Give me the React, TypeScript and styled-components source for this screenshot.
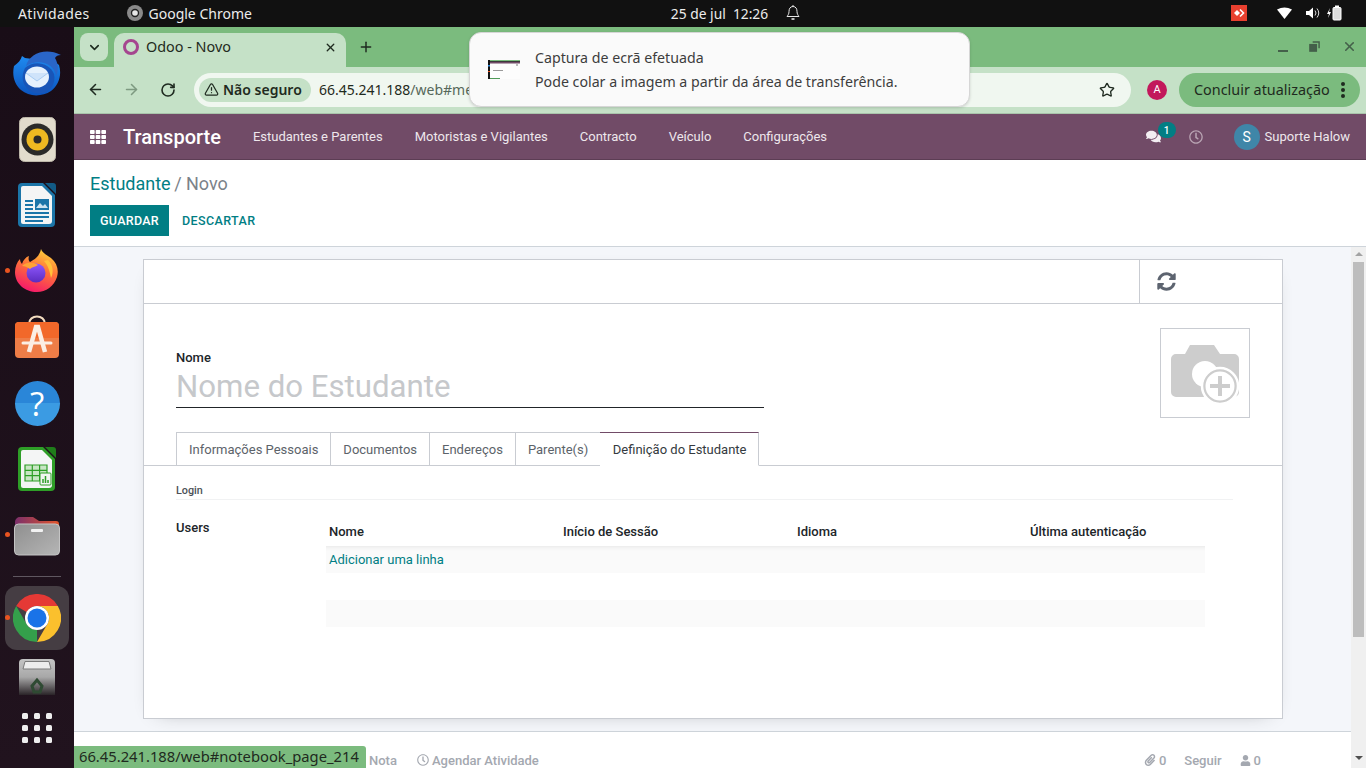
import styled, { createGlobalStyle } from "styled-components";
import {
  ArrowLeft,
  ArrowRight,
  ChevronDown,
  Plus,
  RotateCw,
  Star,
  TriangleAlert,
  X,
} from "lucide-react";
import {
  FaComments,
  FaPaperclip,
  FaRegClock,
  FaSyncAlt,
  FaTh,
  FaUser,
} from "react-icons/fa";

const GlobalStyle = createGlobalStyle`
  html, body {
    margin: 0;
    padding: 0;
    overflow: hidden;
    background: #111;
  }
  * {
    box-sizing: border-box;
  }
`;

const systemFont = `"Noto Sans", "Open Sans", sans-serif`;
const odooFont = `Roboto, "Liberation Sans", sans-serif`;

const Desktop = styled.div`
  width: 1366px;
  height: 768px;
  display: flex;
  flex-direction: column;
  overflow: hidden;
`;

const TopBar = styled.header`
  height: 27px;
  flex: none;
  background: #111111;
  color: #ececec;
  font-family: ${systemFont};
  font-size: 14px;
  display: grid;
  grid-template-columns: 1fr auto 1fr;
  align-items: center;
  padding: 0 0 1px 18px;
`;

const TopLeft = styled.div`
  display: flex;
  align-items: center;
  gap: 37px;
`;

const TopActivities = styled.span`
  letter-spacing: 0.35px;
`;

const ChromeApp = styled.div`
  display: flex;
  align-items: center;
  gap: 6px;
`;

const TopCenter = styled.div`
  display: flex;
  align-items: center;
  gap: 17px;
  font-size: 13.8px;
  margin-left: 88px;
`;

const TopRight = styled.div`
  display: flex;
  align-items: center;
  justify-content: flex-end;
  padding-right: 17px;
`;

const Body = styled.div`
  flex: 1;
  display: flex;
  min-height: 0;
`;

const Dock = styled.nav`
  width: 74px;
  flex: none;
  background: linear-gradient(180deg, #190d17, #21131e);
  display: flex;
  flex-direction: column;
  align-items: center;
  padding-top: 13px;
`;

const DockItem = styled.div<{ $active?: boolean; $running?: boolean }>`
  position: relative;
  width: 64px;
  height: ${(p) => (p.$active ? "64px" : "66px")};
  margin: ${(p) => (p.$active ? "1px 0" : "0")};
  flex: none;
  display: flex;
  align-items: center;
  justify-content: center;
  border-radius: 12px;
  background: ${(p) => (p.$active ? "#453d43" : "transparent")};
  &::before {
    content: "";
    display: ${(p) => (p.$running ? "block" : "none")};
    position: absolute;
    left: 0;
    top: ${(p) => (p.$active ? "29px" : "30px")};
    width: 5px;
    height: 5px;
    border-radius: 50%;
    background: #e95420;
  }
`;

const TrashItem = styled.div`
  width: 64px;
  height: 44px;
  flex: none;
  display: flex;
  align-items: flex-end;
  justify-content: center;
`;

const DockSeparator = styled.div`
  width: 48px;
  height: 1px;
  background: #5f5760;
  flex: none;
  margin: 8px 0;
`;

const Window = styled.main`
  flex: 1;
  min-width: 0;
  position: relative;
  display: flex;
  flex-direction: column;
  font-family: ${odooFont};
`;

const TabStrip = styled.div`
  height: 40px;
  flex: none;
  background: #7bbb7e;
  display: flex;
  align-items: flex-end;
  padding-left: 6px;
`;

const TabSearch = styled.div`
  width: 28px;
  height: 28px;
  background: #c5e1c7;
  border-radius: 8px;
  margin-bottom: 6px;
  display: flex;
  align-items: center;
  justify-content: center;
  color: #1c2a1e;
`;

const Tab = styled.div`
  width: 232px;
  height: 34px;
  margin-left: 6px;
  background: #c5e1c7;
  border-radius: 10px 10px 0 0;
  display: flex;
  align-items: center;
  padding: 0 9px 6px 9px;
  color: #1f2a20;
`;

const Favicon = styled.span`
  width: 16px;
  height: 16px;
  border: 3px solid #a5468f;
  border-radius: 50%;
  flex: none;
  margin-right: 7px;
`;

const TabTitle = styled.span`
  flex: 1;
  font-family: ${systemFont};
  font-size: 14.4px;
  line-height: 18px;
  margin-top: -1px;
`;

const NewTab = styled.div`
  margin: 0 0 12px 12px;
  display: flex;
  color: #1f2a20;
`;

const WindowControls = styled.div`
  margin: 0 9px 13px auto;
  display: flex;
  align-items: center;
  gap: 22px;
  color: #44604a;
`;

const MinimizeMark = styled.span`
  display: block;
  width: 10px;
  height: 6px;
  border-bottom: 2px solid #44604a;
  transform: translate(1px, 2px);
`;

const Toolbar = styled.div`
  height: 47px;
  flex: none;
  background: #c5e1c7;
  border-bottom: 1px solid #a9c4ab;
  display: flex;
  align-items: center;
  padding: 0 6px 1px 13px;
  color: #1f2a20;
`;

const NavButton = styled.span<{ $dim?: boolean }>`
  width: 36px;
  display: flex;
  color: ${(p) => (p.$dim ? "#7e9a81" : "#1f2a20")};
`;

const ReloadButton = styled(NavButton)`
  padding-left: 1px;
`;

const Omnibox = styled.div`
  width: 937px;
  height: 34px;
  margin-left: -1px;
  background: #f0f7f0;
  border-radius: 17px;
  display: flex;
  align-items: center;
  padding: 0 16px 0 5px;
  font-family: ${systemFont};
  font-size: 14px;
`;

const SecurityChip = styled.div`
  width: 112px;
  height: 24px;
  border-radius: 12px;
  background: #c5e1c7;
  display: flex;
  align-items: center;
  gap: 4px;
  padding-left: 5px;
  font-weight: 600;
  font-size: 14px;
  white-space: nowrap;
  margin-right: 8px;
`;

const UrlHost = styled.span`
  color: #1f2a20;
`;

const UrlPath = styled.span`
  color: #56685a;
  flex: 1;
`;

const ProfileBadge = styled.span`
  width: 20px;
  height: 20px;
  border-radius: 50%;
  background: #c2185b;
  color: #fff;
  font-family: ${odooFont};
  font-size: 11px;
  display: flex;
  align-items: center;
  justify-content: center;
  margin: 0 12px 0 16px;
`;

const UpdatePill = styled.div`
  width: 181px;
  height: 34px;
  border-radius: 17px;
  background: #7bbb7e;
  display: flex;
  align-items: center;
  justify-content: space-between;
  padding: 0 15px 0 15px;
  font-family: ${systemFont};
  font-size: 14.4px;
  color: #1f2a20;
  white-space: nowrap;
`;

const Kebab = styled.span`
  width: 4px;
  height: 4px;
  flex: none;
  border-radius: 50%;
  background: #1f2a20;
  box-shadow: 0 -6px 0 #1f2a20, 0 6px 0 #1f2a20;
`;

const OdooNav = styled.div`
  height: 46px;
  flex: none;
  background: #714b67;
  border-bottom: 1px solid #5c3d54;
  color: #fff;
  display: flex;
  align-items: center;
  padding-left: 16px;
`;

const BrandName = styled.span`
  font-size: 20px;
  font-weight: 500;
  margin-left: 17px;
  margin-right: 16px;
`;

const NavLink = styled.a`
  font-size: 13px;
  color: #eee7ec;
  padding: 0 16px;
`;

const NavRight = styled.div`
  margin-left: auto;
  display: flex;
  align-items: center;
  padding-right: 16px;
`;

const ChatIcon = styled.span`
  position: relative;
  display: flex;
  color: #f3eef2;
  margin-right: 28px;
`;

const CountBadge = styled.span`
  position: absolute;
  left: 12px;
  top: -7px;
  width: 18px;
  height: 16px;
  border-radius: 8px;
  background: #017e84;
  color: #fff;
  font-size: 10px;
  font-weight: 500;
  display: flex;
  align-items: center;
  justify-content: center;
`;

const ClockIcon = styled.span`
  display: flex;
  color: #b9a4b3;
  margin-right: 31px;
`;

const UserAvatar = styled.span`
  width: 26px;
  height: 26px;
  border-radius: 50%;
  background: #3f86a8;
  font-size: 14px;
  display: flex;
  align-items: center;
  justify-content: center;
  margin-right: 5px;
`;

const UserName = styled.span`
  font-size: 13px;
  color: #eee7ec;
`;

const ControlPanel = styled.section`
  height: 87px;
  flex: none;
  background: #fff;
  border-bottom: 1px solid #ced4da;
  padding: 13px 16px 0;
`;

const Breadcrumb = styled.div`
  font-size: 18px;
  line-height: 21px;
  color: #017e84;
`;

const BreadcrumbCurrent = styled.span`
  color: #7b8289;
  margin-left: -1px;
`;

const PanelButtons = styled.div`
  display: flex;
  align-items: center;
  margin-top: 11px;
  gap: 13px;
`;

const SaveButton = styled.button`
  width: 79px;
  height: 31px;
  border: 0;
  background: #017e84;
  color: #fff;
  font: 500 12.5px ${odooFont};
  letter-spacing: 0.3px;
  padding: 0;
`;

const DiscardButton = styled.button`
  border: 0;
  background: none;
  color: #017e84;
  font: 500 12.5px ${odooFont};
  letter-spacing: 0.4px;
  padding: 0;
`;

const ViewRow = styled.div`
  flex: 1;
  min-height: 0;
  display: flex;
`;

const ViewColumn = styled.div`
  flex: 1;
  min-width: 0;
  display: flex;
  flex-direction: column;
`;

const SheetBackground = styled.div`
  flex: 1;
  min-height: 0;
  background: #f4f6fa;
  padding: 12px 68px 12px 69px;
  border-bottom: 1px solid #ced4da;
`;

const Sheet = styled.article`
  height: 460px;
  background: #fff;
  border: 1px solid #c9ccd2;
  box-shadow: 0 5px 20px -15px rgba(0, 0, 0, 0.45);
  display: flex;
  flex-direction: column;
`;

const StatusRow = styled.div`
  height: 44px;
  flex: none;
  border-bottom: 1px solid #c9ccd2;
  display: flex;
  justify-content: flex-end;
`;

const StatusButton = styled.div`
  width: 143px;
  border-left: 1px solid #c9ccd2;
  display: flex;
  align-items: center;
  padding-left: 17px;
  color: #5d6470;
`;

const TitleRow = styled.div`
  height: 128px;
  flex: none;
  display: flex;
  justify-content: space-between;
  padding: 24px 32px 0;
`;

const TitleBlock = styled.div`
  width: 588px;
  padding-top: 22px;
`;

const FieldLabel = styled.label`
  display: block;
  font-size: 13px;
  line-height: 15px;
  font-weight: 500;
  color: #212529;
`;

const NameInput = styled.div`
  height: 41px;
  margin-top: 2px;
  padding-top: 2px;
  font-size: 31.2px;
  line-height: 36px;
  color: #c6c8cb;
  border-bottom: 1px solid #212529;
  white-space: nowrap;
`;

const ImagePicker = styled.div`
  width: 90px;
  height: 90px;
  padding-top: 4px;
  border: 1px solid #c9ccd2;
  display: flex;
  align-items: center;
  justify-content: center;
`;

const TabBar = styled.div`
  height: 34px;
  flex: none;
  border-bottom: 1px solid #c9ccd2;
  display: flex;
  padding-left: 32px;
`;

const FormTab = styled.div<{ $active?: boolean }>`
  height: 34px;
  padding: ${(p) => (p.$active ? "0 11.5px 0 12.5px" : "0 12px")};
  display: flex;
  align-items: center;
  font-size: 13px;
  color: ${(p) => (p.$active ? "#343a40" : "#5c636a")};
  background: #fff;
  border: 1px solid #c9ccd2;
  border-left-width: ${(p) => (p.$active ? "0" : "1px")};
  border-right-width: ${(p) => (p.$active ? "1px" : "0")};
  border-top-color: ${(p) => (p.$active ? "#714b67" : "#c9ccd2")};
  border-bottom-color: ${(p) => (p.$active ? "#fff" : "#c9ccd2")};
`;

const TabPane = styled.div`
  flex: 1;
  padding: 18px 49px 0 32px;
`;

const GroupTitle = styled.div`
  height: 16px;
  font-size: 10.8px;
  line-height: 14px;
  font-weight: 500;
  color: #4c5157;
  border-bottom: 1px solid #f1f2f3;
`;

const UsersRow = styled.div`
  display: flex;
  margin-top: 20px;
`;

const UsersLabel = styled.div`
  width: 150px;
  flex: none;
  font-size: 13px;
  line-height: 15px;
  font-weight: 500;
  color: #212529;
`;

const LinesTable = styled.div`
  width: 879px;
  padding-top: 4px;
`;

const LinesHeader = styled.div`
  display: grid;
  grid-template-columns: 234px 234px 233px 1fr;
  height: 22px;
  padding-left: 3px;
  font-size: 13px;
  line-height: 15px;
  font-weight: 500;
  color: #212529;
`;

const LineRow = styled.div<{ $striped?: boolean }>`
  height: 27px;
  padding-left: 3px;
  display: flex;
  align-items: center;
  font-size: 13px;
  background: ${(p) => (p.$striped ? "#fafafa" : "#fff")};
`;

const FirstLineRow = styled(LineRow)`
  box-shadow: inset 0 5px 4px -4px #e6e6e6;
`;

const AddLine = styled.a`
  color: #017e84;
`;

const Chatter = styled.footer`
  height: 36px;
  flex: none;
  background: #fff;
  display: flex;
  align-items: flex-end;
  padding: 0 90px 0 295px;
  font-size: 13px;
  font-weight: 500;
  color: #a4a8b0;
`;

const ChatterText = styled.span`
  display: flex;
  align-items: center;
  gap: 3px;
  line-height: 15px;
  height: 16px;
  white-space: nowrap;
`;

const ChatterLeft = styled(ChatterText)`
  margin-right: 20px;
`;

const ChatterSpacer = styled.span`
  margin-left: auto;
`;

const ChatterRight = styled(ChatterText)`
  margin-left: 18px;
`;

const Scrollbar = styled.div`
  width: 15px;
  flex: none;
  background: #f0f0f0;
  display: flex;
  flex-direction: column;
  align-items: center;
  padding: 5px 2px 0 2px;
`;

const ScrollArrow = styled.span<{ $down?: boolean }>`
  width: 0;
  height: 0;
  border-left: 4px solid transparent;
  border-right: 4px solid transparent;
  border-bottom: ${(p) => (p.$down ? "0" : "4px solid #a3a3a3")};
  border-top: ${(p) => (p.$down ? "4px solid #505050" : "0")};
  margin-top: ${(p) => (p.$down ? "119px" : "0")};
`;

const ScrollThumb = styled.div`
  width: 11px;
  height: 375px;
  background: #bdbdbd;
  margin-top: 6px;
  align-self: flex-start;
`;

const Notification = styled.aside`
  position: absolute;
  left: 395px;
  top: 5px;
  width: 501px;
  height: 75px;
  background: #fafafa;
  border: 1px solid #d6d6d6;
  border-radius: 12px;
  box-shadow: 0 1px 3px rgba(0, 0, 0, 0.15);
  display: flex;
  align-items: center;
  padding: 0 0 0 18px;
  font-family: ${systemFont};
  color: #3d3d3d;
  font-size: 14.2px;
  line-height: 24px;
`;

const ThumbSlot = styled.span`
  display: flex;
  flex: none;
  margin-right: 15px;
`;

const StatusBubble = styled.div`
  position: absolute;
  left: 0;
  bottom: 0;
  width: 292px;
  height: 22px;
  background: #7bbb7e;
  border-radius: 0 3px 0 0;
  font-family: ${systemFont};
  font-size: 14.75px;
  line-height: 21px;
  color: #1f2a20;
  padding-left: 5px;
  white-space: nowrap;
`;

function ScreenshotThumb() {
  return (
    <svg width="32" height="19" viewBox="0 0 32 19">
      <rect width="32" height="19" fill="#fdfdfd" />
      <rect width="32" height="1" fill="#7bbb7e" />
      <rect y="1" width="32" height="1" fill="#3a3a3a" />
      <rect y="2" width="32" height="1.500" fill="#714b67" />
      <rect width="2" height="19" fill="#111" />
      <rect x="0" y="5" width="2" height="1.500" fill="#2a86d8" />
      <rect x="0" y="11" width="2" height="1" fill="#e95420" />
      <rect x="2" y="18" width="10" height="1" fill="#4f9a57" />
      <rect x="5" y="10" width="10" height="1" fill="#9a9a9a" />
      <rect x="28" y="4" width="2" height="2" fill="#bbb" />
    </svg>
  );
}

function ChromeGlyph() {
  return (
    <svg width="16" height="16" viewBox="0 0 16 16">
      <circle cx="8" cy="8" r="8" fill="#8a8a8a" />
      <circle cx="8" cy="8" r="4.2" fill="#222" />
      <circle cx="8" cy="8" r="2.8" fill="#e6e6e6" />
    </svg>
  );
}

function TrayIcons() {
  return (
    <svg width="118" height="18" viewBox="0 0 118 18">
      <rect x="0" y="1" width="16" height="16" fill="#e8402f" />
      <path d="M3 9l3-3 3 3-3 3z" fill="#fff" />
      <path d="M9 5.5l3.5 3.500-3.500 3.500" fill="none" stroke="#fff" strokeWidth="1.6" />
      <path d="M46 5.5q7.5-4.2 15 0l-7.5 9.5z" fill="#fff" />
      <path d="M75 7h3l4-3.5v11l-4-3.5h-3z" fill="#fff" />
      <path d="M84 6.5q2 2.500 0 5M86 4.500q3.500 4.500 0 9" fill="none" stroke="#ddd" strokeWidth="1" />
      <path d="M99 4l-3 6h2l-1 4 3-6h-2z" fill="#fff" />
      <rect x="102" y="3.500" width="8" height="12.500" rx="1" fill="#ddd" stroke="#fff" strokeWidth="1" />
      <rect x="104" y="1.500" width="4" height="2" fill="#fff" />
    </svg>
  );
}

function BellIcon() {
  return (
    <svg width="16" height="18" viewBox="0 0 16 18" fill="none" stroke="#e8e8e8" strokeWidth="1">
      <path d="M8 2.500c3 0 4 2.500 4 5 0 2.500 1 3.500 2 5H2c1-1.500 2-2.500 2-5 0-2.500 1-5 4-5z" />
      <path d="M6.500 15h3" strokeWidth="1.6" />
      <path d="M8 1v1.500" />
    </svg>
  );
}

function Thunderbird() {
  return (
    <svg width="48" height="46" viewBox="0 0 48 46">
      <defs>
        <linearGradient id="tb" x1="0" y1="0" x2="0" y2="1">
          <stop offset="0" stopColor="#1f8bf0" />
          <stop offset="1" stopColor="#0b53bd" />
        </linearGradient>
      </defs>
      <path d="M9 6C8 10 5 13 1 16c-2 9 0 18 7 24 8 7 21 7 30 1 8-6 11-16 8-26l-4-3-30-4z" fill="url(#tb)" />
      <path d="M13 16C16 4 32-3 48 5c-3 0-5 1-6 3 3 5 4 12 1 18C42 14 26 8 13 16z" fill="#2a66c8" />
      <path d="M12 18c8-8 24-6 29 6 2 9-3 17-11 19-10 2-18-4-20-12-1-5 0-9 2-13z" fill="#1855b8" />
      <ellipse cx="24" cy="27" rx="12" ry="10.500" fill="#e6f1fd" />
      <path d="M13 23l11 8 11-8" fill="#cfe3fa" stroke="#a8ccf3" strokeWidth="1" />
    </svg>
  );
}

function Rhythmbox() {
  return (
    <svg width="37" height="45" viewBox="0 0 37 45">
      <rect x="0.500" y="0.500" width="36" height="44" rx="5" fill="#e2dccd" stroke="#bdb7a9" />
      <circle cx="18.500" cy="22.500" r="16" fill="#2b2a29" />
      <circle cx="18.500" cy="22.500" r="11" fill="#eeb921" />
      <circle cx="18.500" cy="22.500" r="4" fill="#2b2a29" />
    </svg>
  );
}

function DocIcon({ edge, corner, kind }: { edge: string; corner: string; kind: "writer" | "calc" }) {
  return (
    <svg width="38" height="46" viewBox="0 0 38 46">
      <path d="M4 1h21l12 12v28a4 4 0 0 1-4 4H4a4 4 0 0 1-4-4V5a4 4 0 0 1 4-4z" fill={edge} />
      <path d="M27 1h8a3 3 0 0 1 3 3v8z" fill={corner} />
      <path d="M5 4h19l10 10v25a3 3 0 0 1-3 3H5a2 2 0 0 1-2-2V6a2 2 0 0 1 2-2z" fill="#f4f5f5" />
      {kind === "writer" ? (
        <>
          <rect x="7" y="18" width="8" height="2" fill={edge} />
          <rect x="7" y="22" width="8" height="2" fill={edge} />
          <rect x="7" y="26" width="8" height="2" fill={edge} />
          <rect x="17" y="17" width="14" height="11" fill={edge} />
          <path d="M18 26l4-5 3 3 2-2 3 4z" fill="#cfe3ef" />
          <rect x="7" y="30" width="24" height="2" fill={edge} />
          <rect x="7" y="34" width="24" height="2" fill={edge} />
          <rect x="7" y="38" width="18" height="2" fill={edge} />
        </>
      ) : (
        <>
          <path d="M7 19h22v16H7z" fill="#c8e6c4" stroke={edge} strokeWidth="1.200" />
          <path d="M7 24.300h22M7 29.600h22M14.300 19v16M21.600 19v16" stroke={edge} strokeWidth="1.200" />
          <rect x="22" y="27" width="11" height="12" rx="1" fill="#f4f5f5" stroke={edge} />
          <path d="M25 37v-4M27.500 37v-7M30 37v-3" stroke={edge} strokeWidth="1.500" />
        </>
      )}
    </svg>
  );
}

function Firefox() {
  return (
    <svg width="44" height="44" viewBox="0 0 44 44">
      <defs>
        <linearGradient id="ff" x1="0.700" y1="0" x2="0.300" y2="1">
          <stop offset="0" stopColor="#ffd43a" />
          <stop offset="0.450" stopColor="#ff7139" />
          <stop offset="1" stopColor="#f5156c" />
        </linearGradient>
        <linearGradient id="ffp" x1="0.500" y1="0" x2="0.500" y2="1">
          <stop offset="0" stopColor="#9059ff" />
          <stop offset="1" stopColor="#5b2cc0" />
        </linearGradient>
      </defs>
      <path d="M26 0c1 4 6 6 10 9 6 5 8 12 6 19-3 9-11 15-20 15C10 43 0 35 0 23c0-5 2-10 5-13 0 2 1 4 2 5 1-4 4-7 7-8-1 3 0 5 1 6 3-2 9-4 11-13z" fill="url(#ff)" />
      <circle cx="21" cy="24" r="9.500" fill="url(#ffp)" />
      <path d="M7 17c4-4 11-4 16-1-3 2-6 2-8 4-3-2-5-3-8-3z" fill="#ffa436" />
      <path d="M33 11c5 5 6 12 3 18-1-6-3-13-7-17z" fill="#ffc23a" />
    </svg>
  );
}

function AppStore() {
  return (
    <svg width="46" height="44" viewBox="0 0 46 44">
      <path d="M15 9c0-10 16-10 16 0" fill="none" stroke="#f3dcc0" strokeWidth="2" />
      <rect x="1" y="7" width="44" height="36" rx="4" fill="#ee7d47" />
      <path d="M5 7h36a4 4 0 0 1 4 4v12H1V11a4 4 0 0 1 4-4z" fill="#f2682a" />
      <path d="M15 37l7-25h2l7 25" fill="none" stroke="#fbeee4" strokeWidth="4.500" />
      <path d="M9 28h28" stroke="#fbeee4" strokeWidth="3" strokeLinecap="round" />
    </svg>
  );
}

const HelpBall = styled.span`
  width: 45px;
  height: 45px;
  border-radius: 50%;
  background: linear-gradient(180deg, #2a86d8 0 50%, #3b9be3 50% 100%);
  color: #fff;
  font-family: "Open Sans", ${systemFont};
  font-weight: 400;
  font-size: 33px;
  display: flex;
  align-items: center;
  justify-content: center;
`;

function Files() {
  return (
    <svg width="46" height="42" viewBox="0 0 46 42">
      <defs>
        <linearGradient id="fd" x1="0" y1="0" x2="1" y2="0">
          <stop offset="0" stopColor="#7b2f6a" />
          <stop offset="1" stopColor="#e2552b" />
        </linearGradient>
        <linearGradient id="fg" x1="0" y1="0" x2="1" y2="1">
          <stop offset="0" stopColor="#8f8f8f" />
          <stop offset="1" stopColor="#b5b5b5" />
        </linearGradient>
      </defs>
      <path d="M1 8a5 5 0 0 1 5-5h13l6 4h17a3 3 0 0 1 3 3v10H1z" fill="url(#fd)" />
      <rect x="0.500" y="10" width="45" height="31" rx="4" fill="url(#fg)" stroke="#c4c4c4" />
      <rect x="17" y="15" width="12" height="3" rx="1" fill="#f2f2f2" />
    </svg>
  );
}

function ChromeLogo({ size }: { size: number }) {
  return (
    <svg width={size} height={size} viewBox="0 0 48 48">
      <path d="M3.200 12A24 24 0 0 1 44.800 12H24a12 12 0 0 0-10.400 6z" fill="#e53935" />
      <path d="M3.200 12l10.400 18A12 12 0 0 0 24 36L24 48A24 24 0 0 1 3.200 12z" fill="#34a04b" />
      <path d="M44.800 12A24 24 0 0 1 24 48L34.400 30A12 12 0 0 0 34.400 18 12 12 0 0 0 24 12z" fill="#fbc02d" />
      <circle cx="24" cy="24" r="12" fill="#fff" />
      <circle cx="24" cy="24" r="9.500" fill="#1a73e8" />
    </svg>
  );
}

function Trash() {
  return (
    <svg width="36" height="36" viewBox="0 0 36 36">
      <defs>
        <linearGradient id="tr" x1="0" y1="0" x2="0" y2="1">
          <stop offset="0" stopColor="#c4c4c4" />
          <stop offset="0.500" stopColor="#a8a8a8" />
          <stop offset="1" stopColor="#2a2428" />
        </linearGradient>
      </defs>
      <path d="M4 0h28a4 4 0 0 1 4 4v32H0V4a4 4 0 0 1 4-4z" fill="url(#tr)" />
      <path d="M6 2.500h24l2 7.500H4z" fill="#ececec" stroke="#7a7a7a" />
      <path d="M13 27l5-6 5 6-2 6h-6z" fill="none" stroke="#2f4a33" strokeWidth="3" />
    </svg>
  );
}

const AppsGrid = styled.span`
  display: grid;
  grid-template-columns: repeat(3, 6px);
  gap: 6px;
`;

const AppsDot = styled.span`
  width: 6px;
  height: 6px;
  border-radius: 1.5px;
  background: #eee;
`;

function CameraPlus() {
  return (
    <svg width="68" height="60" viewBox="0 0 68 60">
      <path d="M5 9h9l5-9h24l6 9h14a5 5 0 0 1 5 5v33a5 5 0 0 1-5 5H5a5 5 0 0 1-5-5V14a5 5 0 0 1 5-5z" fill="#cdcdcd" />
      <circle cx="34" cy="29" r="13" fill="#fff" />
      <circle cx="49" cy="41" r="18" fill="#cdcdcd" stroke="#fff" strokeWidth="2.500" />
      <circle cx="49" cy="41" r="14.500" fill="#fff" />
      <path d="M49 31v20M39 41h20" stroke="#cdcdcd" strokeWidth="4" />
    </svg>
  );
}

const RestoreIcon = () => (
  <svg width="11" height="11" viewBox="0 0 12 12" fill="none" stroke="#44604a" strokeWidth="1.600">
    <rect x="1" y="4" width="7" height="7" fill="#44604a" />
    <path d="M4 1h7v7" />
  </svg>
);

const dockDots = Array.from({ length: 9 }, (_, i) => i);

export default function App() {
  return (
    <Desktop>
      <GlobalStyle />
      <TopBar>
        <TopLeft>
          <TopActivities>Atividades</TopActivities>
          <ChromeApp>
            <ChromeGlyph />
            <span>Google Chrome</span>
          </ChromeApp>
        </TopLeft>
        <TopCenter>
          <span>25 de jul&nbsp; 12:26</span>
          <BellIcon />
        </TopCenter>
        <TopRight>
          <TrayIcons />
        </TopRight>
      </TopBar>
      <Body>
        <Dock>
          <DockItem><Thunderbird /></DockItem>
          <DockItem><Rhythmbox /></DockItem>
          <DockItem><DocIcon edge="#1b75a8" corner="#125a85" kind="writer" /></DockItem>
          <DockItem $running><Firefox /></DockItem>
          <DockItem><AppStore /></DockItem>
          <DockItem><HelpBall>?</HelpBall></DockItem>
          <DockItem><DocIcon edge="#2e9e27" corner="#1f7d1a" kind="calc" /></DockItem>
          <DockItem $running><Files /></DockItem>
          <DockSeparator />
          <DockItem $active $running><ChromeLogo size={48} /></DockItem>
          <TrashItem><Trash /></TrashItem>
          <DockItem>
            <AppsGrid>
              {dockDots.map((d) => <AppsDot key={d} />)}
            </AppsGrid>
          </DockItem>
        </Dock>

        <Window>
          <TabStrip>
            <TabSearch><ChevronDown size={15} strokeWidth={2.5} /></TabSearch>
            <Tab>
              <Favicon />
              <TabTitle>Odoo - Novo</TabTitle>
              <X size={13} strokeWidth={2.5} />
            </Tab>
            <NewTab><Plus size={16} strokeWidth={2.2} /></NewTab>
            <WindowControls>
              <MinimizeMark />
              <RestoreIcon />
              <X size={15} strokeWidth={2.5} />
            </WindowControls>
          </TabStrip>
          <Toolbar>
            <NavButton><ArrowLeft size={17} strokeWidth={2.2} /></NavButton>
            <NavButton $dim><ArrowRight size={17} strokeWidth={2.2} /></NavButton>
            <ReloadButton><RotateCw size={16} strokeWidth={2.4} /></ReloadButton>
            <Omnibox>
              <SecurityChip>
                <TriangleAlert size={15} strokeWidth={2} />
                Não seguro
              </SecurityChip>
              <UrlHost>66.45.241.188</UrlHost>
              <UrlPath>/web#menu_id=214</UrlPath>
              <Star size={16} strokeWidth={2} />
            </Omnibox>
            <ProfileBadge>A</ProfileBadge>
            <UpdatePill>
              Concluir atualização
              <Kebab />
            </UpdatePill>
          </Toolbar>
          <OdooNav>
            <FaTh size={16} />
            <BrandName>Transporte</BrandName>
            <NavLink>Estudantes e Parentes</NavLink>
            <NavLink>Motoristas e Vigilantes</NavLink>
            <NavLink>Contracto</NavLink>
            <NavLink>Veículo</NavLink>
            <NavLink>Configurações</NavLink>
            <NavRight>
              <ChatIcon>
                <FaComments size={15} />
                <CountBadge>1</CountBadge>
              </ChatIcon>
              <ClockIcon><FaRegClock size={14} /></ClockIcon>
              <UserAvatar>S</UserAvatar>
              <UserName>Suporte Halow</UserName>
            </NavRight>
          </OdooNav>
          <ControlPanel>
            <Breadcrumb>
              Estudante <BreadcrumbCurrent>/ Novo</BreadcrumbCurrent>
            </Breadcrumb>
            <PanelButtons>
              <SaveButton>GUARDAR</SaveButton>
              <DiscardButton>DESCARTAR</DiscardButton>
            </PanelButtons>
          </ControlPanel>
          <ViewRow>
            <ViewColumn>
              <SheetBackground>
                <Sheet>
                  <StatusRow>
                    <StatusButton><FaSyncAlt size={19} /></StatusButton>
                  </StatusRow>
                  <TitleRow>
                    <TitleBlock>
                      <FieldLabel>Nome</FieldLabel>
                      <NameInput>Nome do Estudante</NameInput>
                    </TitleBlock>
                    <ImagePicker><CameraPlus /></ImagePicker>
                  </TitleRow>
                  <TabBar>
                    <FormTab>Informações Pessoais</FormTab>
                    <FormTab>Documentos</FormTab>
                    <FormTab>Endereços</FormTab>
                    <FormTab>Parente(s)</FormTab>
                    <FormTab $active>Definição do Estudante</FormTab>
                  </TabBar>
                  <TabPane>
                    <GroupTitle>Login</GroupTitle>
                    <UsersRow>
                      <UsersLabel>Users</UsersLabel>
                      <LinesTable>
                        <LinesHeader>
                          <span>Nome</span>
                          <span>Início de Sessão</span>
                          <span>Idioma</span>
                          <span>Última autenticação</span>
                        </LinesHeader>
                        <FirstLineRow $striped>
                          <AddLine>Adicionar uma linha</AddLine>
                        </FirstLineRow>
                        <LineRow />
                        <LineRow $striped />
                      </LinesTable>
                    </UsersRow>
                  </TabPane>
                </Sheet>
              </SheetBackground>
              <Chatter>
                <ChatterLeft>Nota</ChatterLeft>
                <ChatterLeft><FaRegClock size={12} /> Agendar Atividade</ChatterLeft>
                <ChatterSpacer />
                <ChatterText><FaPaperclip size={12} /> 0</ChatterText>
                <ChatterRight>Seguir</ChatterRight>
                <ChatterRight><FaUser size={11} /> 0</ChatterRight>
              </Chatter>
            </ViewColumn>
            <Scrollbar>
              <ScrollArrow />
              <ScrollThumb />
              <ScrollArrow $down />
            </Scrollbar>
          </ViewRow>

          <Notification>
            <ThumbSlot><ScreenshotThumb /></ThumbSlot>
            <div>
              <div>Captura de ecrã efetuada</div>
              <div>Pode colar a imagem a partir da área de transferência.</div>
            </div>
          </Notification>
          <StatusBubble>66.45.241.188/web#notebook_page_214</StatusBubble>
        </Window>
      </Body>
    </Desktop>
  );
}
